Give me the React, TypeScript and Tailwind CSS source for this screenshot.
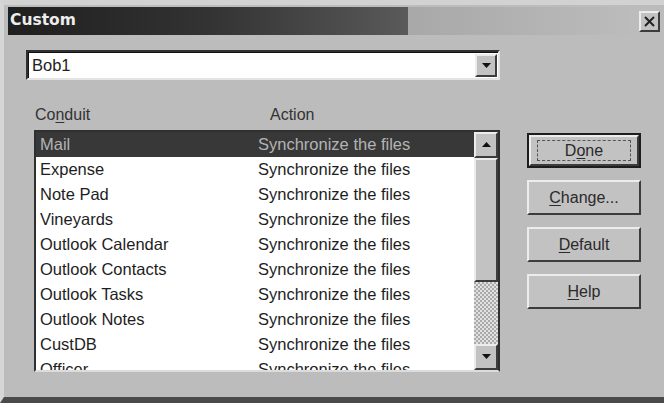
import React from 'react';

const conduits = [
  'Mail',
  'Expense',
  'Note Pad',
  'Vineyards',
  'Outlook Calendar',
  'Outlook Contacts',
  'Outlook Tasks',
  'Outlook Notes',
  'CustDB',
  'Officer',
];

const uiFont = { fontFamily: '"Liberation Sans", Arial, sans-serif' };

function Raised({ className = '', children }: { className?: string; children?: React.ReactNode }) {
  return (
    <div
      className={`border-2 border-t-[#ececec] border-l-[#ececec] border-r-[#3c3c3c] border-b-[#3c3c3c] bg-[#c2c2c2] flex items-center justify-center ${className}`}
    >
      {children}
    </div>
  );
}

function Arrow({ down }: { down?: boolean }) {
  return (
    <svg width="9" height="6" viewBox="0 0 9 6">
      <path d={down ? 'M0 0 H9 L4.5 5 Z' : 'M0 5 H9 L4.5 0 Z'} fill="#111" />
    </svg>
  );
}

function DialogButton({ label, mnemonic, isDefault }: { label: string; mnemonic: number; isDefault?: boolean }) {
  const text = (
    <span className="text-[16px] text-[#2a2a2a]">
      {label.slice(0, mnemonic)}
      <span className="underline underline-offset-2">{label[mnemonic]}</span>
      {label.slice(mnemonic + 1)}
    </span>
  );
  if (isDefault) {
    return (
      <div className="h-[35px] border-2 border-[#1e1e1e]">
        <Raised className="h-full">
          <div className="border border-dashed border-[#555] w-[94px] h-[21px] flex items-center justify-center">
            {text}
          </div>
        </Raised>
      </div>
    );
  }
  return <Raised className="h-[35px]">{text}</Raised>;
}

export default function App() {
  return (
    <div
      className="w-[664px] h-[403px] bg-[#bcbcbc] border-l-[4px] border-l-[#d6d6d6] border-t-[5px] border-t-[#d2d2d2] border-b-[6px] border-b-[#4a4a4a] overflow-hidden"
      style={uiFont}
    >
      {/* Title bar */}
      <div className="ml-[4px] mr-[4px] mt-[2px] h-[28px] flex items-center">
        <div className="w-[400px] h-full bg-gradient-to-r from-[#1f1f1f] via-[#333333] to-[#5a5a5a] flex items-center pl-[2px]">
          <span
            className="text-[15.5px] font-bold text-[#ededed]"
            style={{ fontFamily: '"DejaVu Sans", Verdana, sans-serif' }}
          >
            Custom
          </span>
        </div>
        <div className="flex-1 h-full bg-gradient-to-r from-[#a8a8a8] to-[#bcbcbc]" />
        <Raised className="w-[21px] h-[21px] ml-[2px]">
          <svg width="11" height="11" viewBox="0 0 11 11">
            <path d="M1 1 L10 10 M10 1 L1 10" stroke="#222" strokeWidth="2" />
          </svg>
        </Raised>
      </div>

      {/* Body */}
      <div className="pl-[22px] pt-[15px]">
        {/* Profile combo */}
        <div className="w-[474px] h-[30px] border-2 border-t-[#303030] border-l-[#303030] border-r-[#e4e4e4] border-b-[#e4e4e4] flex">
          <div className="flex-1 bg-white flex items-center pl-[3px] text-[16.5px] text-[#222] border-t border-l border-[#111]">
            Bob1
          </div>
          <div className="bg-white border-t border-[#111] py-[1px] pr-[1px]">
            <Raised className="w-[22px] h-full">
              <Arrow down />
            </Raised>
          </div>
        </div>

        {/* Column headings */}
        <div className="mt-[25px] h-[20px] flex items-center text-[16px] text-[#333]">
          <span className="ml-[9px] w-[235px]">
            Co<span className="underline underline-offset-2">n</span>duit
          </span>
          <span>Action</span>
        </div>

        <div className="mt-[5px] flex items-start">
          {/* Conduit list */}
          <div className="ml-[8px] w-[466px] h-[242px] border-2 border-t-[#303030] border-l-[#303030] border-r-[#303030] border-b-[#dcdcdc] bg-white flex overflow-hidden">
            <div className="flex-1 overflow-hidden">
              {conduits.map((name, i) => (
                <div
                  key={name}
                  className={`h-[25px] flex items-center text-[16.5px] ${
                    i === 0 ? 'bg-[#383838] text-[#b4b4b4]' : 'text-[#1e1e1e]'
                  }`}
                >
                  <span className="pl-[4px] w-[222px] shrink-0">{name}</span>
                  <span>Synchronize the files</span>
                </div>
              ))}
            </div>

            {/* Scrollbar */}
            <div className="w-[24px] flex flex-col">
              <Raised className="h-[26px]">
                <Arrow />
              </Raised>
              <Raised className="h-[124px]" />
              <div className="flex-1 bg-[repeating-conic-gradient(#e2e2e2_0%_25%,#a9a9a9_0%_50%)] bg-[length:4px_4px]" />
              <Raised className="h-[26px]">
                <Arrow down />
              </Raised>
            </div>
          </div>

          {/* Buttons */}
          <div className="ml-[27px] mt-[3px] w-[114px] flex flex-col gap-3">
            <DialogButton label="Done" mnemonic={1} isDefault />
            <DialogButton label="Change..." mnemonic={0} />
            <DialogButton label="Default" mnemonic={0} />
            <DialogButton label="Help" mnemonic={0} />
          </div>
        </div>
      </div>
    </div>
  );
}
